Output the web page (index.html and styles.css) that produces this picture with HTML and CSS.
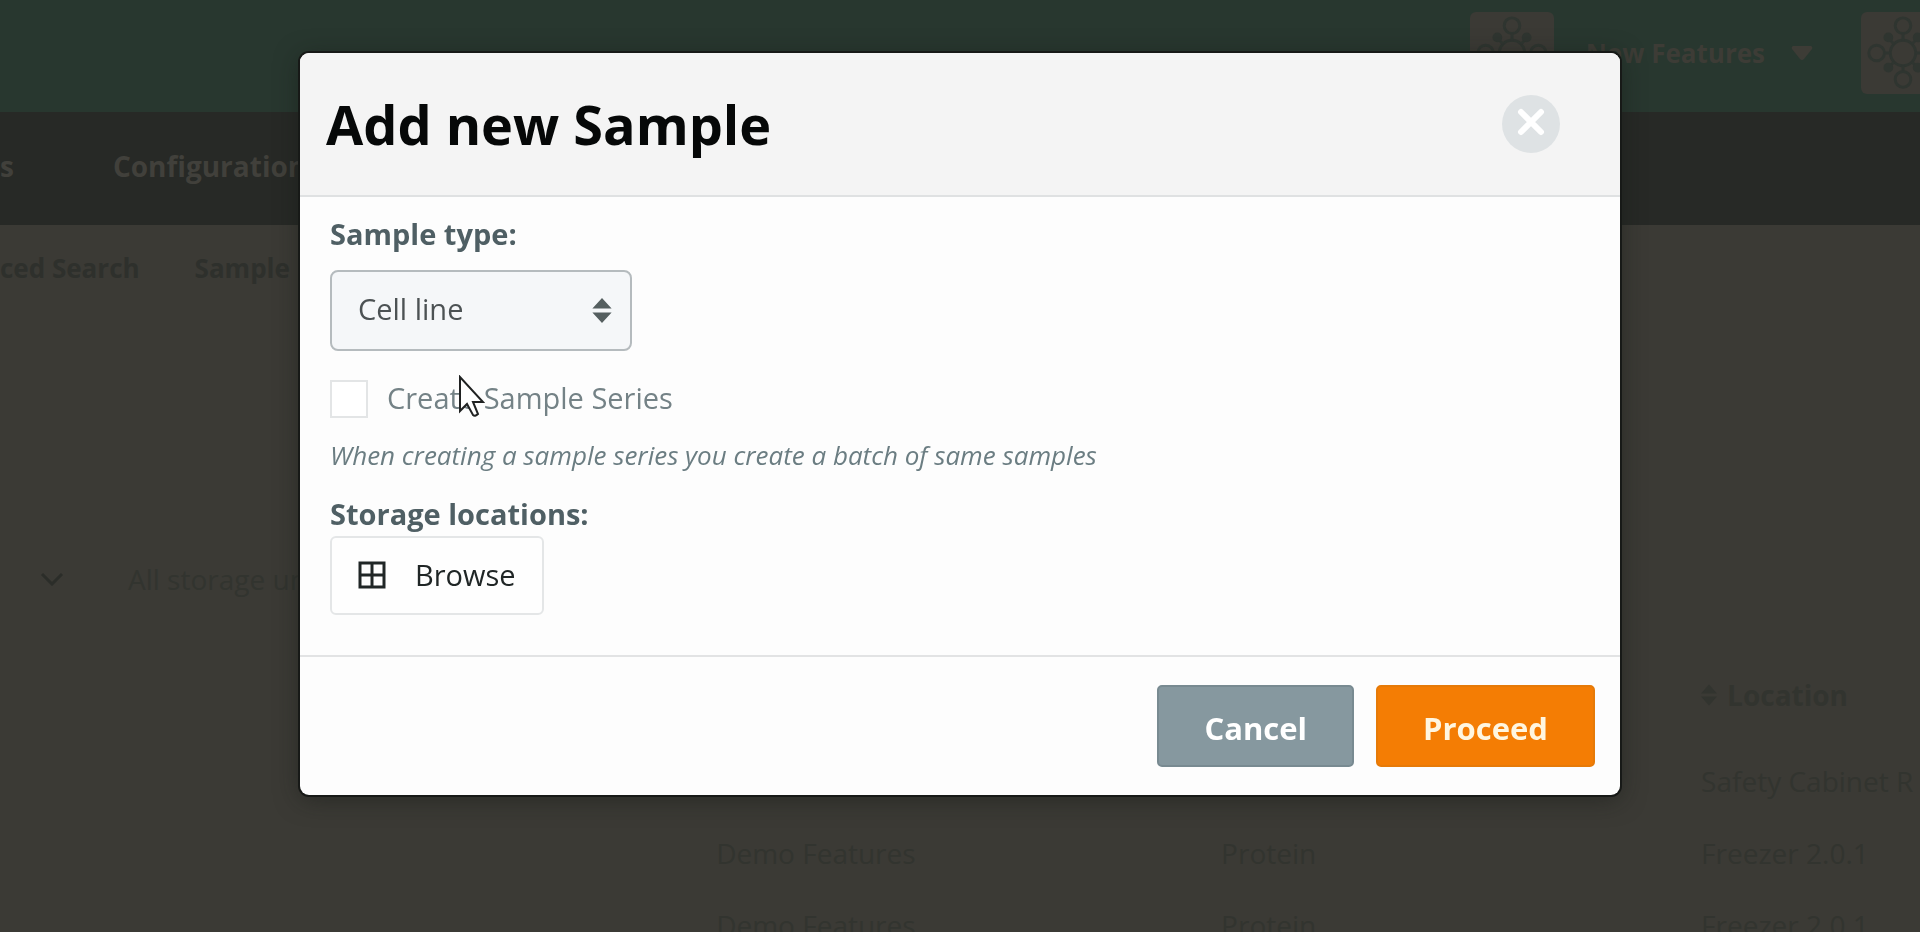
FILE: index.html
```html
<!DOCTYPE html>
<html lang="en">
<head>
    <meta charset="UTF-8">
    <meta name="viewport" content="width=device-width, initial-scale=1.0">
    <title>Add new Sample</title>
    <link rel="stylesheet" href="styles.css">
</head>
<body>
    <!-- shared shapes -->
    <svg class="defs" aria-hidden="true">
        <symbol id="molecule" viewBox="0 0 84 84">
            <g fill="none" stroke="currentColor" stroke-width="3">
                <circle cx="42" cy="42" r="13"/>
                <circle cx="42" cy="14" r="8"/>
                <circle cx="42" cy="69" r="8"/>
                <circle cx="15" cy="42" r="8"/>
                <circle cx="69" cy="42" r="8"/>
                <path d="M42 22v7M42 55v5M23 42h6M55 42h6M28 28l5 5M56 28l-5 5M28 56l5-5M56 56l-5-5"/>
            </g>
            <g fill="currentColor">
                <circle cx="27" cy="26" r="5"/>
                <circle cx="57" cy="26" r="5"/>
                <circle cx="27" cy="57" r="5"/>
                <circle cx="57" cy="57" r="5"/>
            </g>
        </symbol>
        <symbol id="sort" viewBox="0 0 20 26">
            <path d="M10 0L20 11H0zM0 15h20L10 26z" fill="currentColor"/>
        </symbol>
    </svg>

    <div class="page" inert>
        <header class="topbar">
            <span class="logo"><svg><use href="#molecule"/></svg></span>
            <a class="account" href="#">New Features</a>
            <svg class="caret" viewBox="0 0 22 14"><path d="M2 0h18q2 1 1 3L13 13q-2 2-4 0L1 3Q0 1 2 0z"/></svg>
            <span class="logo"><svg><use href="#molecule"/></svg></span>
        </header>
        <nav class="mainnav">
            <a href="#">s</a>
            <a href="#">Configuration</a>
        </nav>
        <nav class="subnav">
            <a href="#">ced Search</a>
            <a href="#">Sample</a>
        </nav>
        <div class="filters">
            <svg class="chevron" viewBox="0 0 24 14"><path d="M2 2l10 10L22 2"/></svg>
            <span>All storage units</span>
        </div>
        <table class="samples">
            <colgroup><col class="name"><col class="project"><col class="type"><col></colgroup>
            <thead>
                <tr><th></th><th></th><th></th><th><svg class="sort"><use href="#sort"/></svg>Location</th></tr>
            </thead>
            <tbody>
                <tr><td></td><td></td><td></td><td>Safety Cabinet R</td></tr>
                <tr><td></td><td>Demo Features</td><td>Protein</td><td>Freezer 2.0.1</td></tr>
                <tr><td></td><td>Demo Features</td><td>Protein</td><td>Freezer 2.0.1</td></tr>
            </tbody>
        </table>
    </div>

    <div class="overlay">
        <form class="modal" role="dialog" aria-labelledby="modalTitle">
            <div class="modal-header">
                <h1 id="modalTitle">Add new Sample</h1>
                <button type="button" class="close" aria-label="Close">
                    <svg viewBox="0 0 28 28"><path d="M4 4l20 20M24 4L4 24"/></svg>
                </button>
            </div>
            <div class="modal-body">
                <label class="title" for="sampleType">Sample type:</label>
                <div class="select">
                    <select id="sampleType">
                        <option>Cell line</option>
                    </select>
                    <svg><use href="#sort"/></svg>
                </div>
                <div class="check">
                    <input type="checkbox" id="series">
                    <label for="series">Create Sample Series</label>
                    <svg class="pointer" viewBox="0 0 27 42"><path d="M2 2v34l7-7 6 11q2 2 5-1l-5-12h10z"/></svg>
                </div>
                <p class="hint">When creating a sample series you create a batch of same samples</p>
                <label class="title" for="browse">Storage locations:</label>
                <button type="button" class="browse" id="browse" aria-label="Browse">
                    <svg viewBox="0 0 28 28"><path d="M2 2h24v24H2zM14 2v24M2 14h24"/></svg>
                    Browse
                </button>
            </div>
            <div class="modal-footer">
                <button type="button" class="btn cancel">Cancel</button>
                <button type="submit" class="btn proceed">Proceed</button>
            </div>
        </form>
    </div>
</body>
</html>
```

FILE: styles.css
```css
* {
    box-sizing: border-box;
}
body {
    margin: 0;
    height: 100vh;
    overflow: hidden;
    background: #3b3a35;
    color: #32342f;
    font-family: "Open Sans", "Noto Sans", sans-serif;
    font-size: 28px;
    line-height: 40px;
}
a {
    color: inherit;
    text-decoration: none;
}
button,
select {
    font: inherit;
}
.defs {
    display: none;
}

/* page behind the dialog */
.page {
    height: 100vh;
    overflow: hidden;
    white-space: nowrap;
}
.topbar {
    display: flex;
    align-items: center;
    justify-content: flex-end;
    height: 112px;
    padding-bottom: 6px;
    background: #28372f;
    color: #3d3c36;
    font-size: 26px;
    font-weight: 700;
}
.logo {
    flex: none;
    width: 84px;
    height: 82px;
    border-radius: 6px;
    background: #3b3a35;
    color: #2f3530;
}
.logo svg {
    width: 84px;
    height: 82px;
}
.logo:last-child {
    margin-left: 48px;
    margin-right: -25px;
}
.account {
    margin: 0 26px 0 32px;
}
.caret {
    width: 22px;
    height: 14px;
    fill: currentColor;
}
.mainnav,
.subnav {
    display: flex;
    align-items: center;
    font-weight: 700;
}
.mainnav {
    gap: 99px;
    height: 113px;
    padding-bottom: 5px;
    background: #272926;
    color: #41403b;
}
.subnav {
    gap: 55px;
    height: 86px;
    color: #2e302c;
    font-size: 26px;
}
.filters {
    display: flex;
    align-items: center;
    gap: 64px;
    height: 334px;
    padding: 238px 0 36px 40px;
}
.chevron {
    width: 24px;
    height: 14px;
    fill: none;
    stroke: #2b2d29;
    stroke-width: 3;
}
.samples {
    width: 100%;
    table-layout: fixed;
    border-collapse: collapse;
}
.samples .name {
    width: 37.3%;
}
.samples .project {
    width: 26.3%;
}
.samples .type {
    width: 25%;
}
.samples th,
.samples td {
    height: 72px;
    padding: 0;
    text-align: left;
}
.samples th {
    height: 100px;
}
.samples .sort {
    width: 16px;
    height: 22px;
    margin-right: 10px;
}

/* dialog */
.overlay {
    position: fixed;
    inset: 0;
    display: flex;
    align-items: flex-start;
    justify-content: center;
    padding: 53px 24px;
}
.modal {
    width: 100%;
    max-width: 1320px;
    overflow: hidden;
    border-radius: 9px;
    background: #fdfdfd;
    color: #59686c;
    font-size: 29px;
    box-shadow: 0 0 0 2px #171917, 0 4px 24px rgba(20, 24, 20, 0.5);
}
.modal-header {
    display: flex;
    align-items: center;
    justify-content: space-between;
    height: 144px;
    padding: 0 60px 0 26px;
    border-bottom: 2px solid #dfe1e2;
    background: #f4f4f4;
}
.modal-header h1 {
    margin: 0;
    color: #060808;
    font-size: 54px;
    line-height: 72px;
}
.close {
    display: flex;
    align-items: center;
    justify-content: center;
    width: 58px;
    height: 58px;
    padding: 0 0 4px;
    border: 0;
    border-radius: 50%;
    background: #dee2e4;
}
.close svg {
    width: 28px;
    height: 28px;
    fill: none;
    stroke: #fff;
    stroke-width: 6;
    stroke-linecap: round;
}
.modal-body {
    padding: 17px 30px 40px;
}
.title {
    display: block;
    color: #4f5f64;
    font-weight: 700;
}
.select {
    position: relative;
    width: 302px;
    margin-top: 16px;
}
.select select {
    display: block;
    width: 100%;
    height: 81px;
    padding: 0 26px 4px;
    border: 2px solid #b5bbbe;
    border-radius: 8px;
    background: #f5f7f9;
    color: #4c5254;
    appearance: none;
}
.select svg {
    position: absolute;
    top: 28px;
    right: 20px;
    width: 20px;
    height: 25px;
    color: #555f60;
    pointer-events: none;
}
.check {
    position: relative;
    display: flex;
    align-items: center;
    gap: 19px;
    margin-top: 28px;
    color: #748286;
}
.check input {
    width: 38px;
    height: 38px;
    margin: 0;
    border: 2px solid #e3e5e6;
    background: #fff;
    appearance: none;
}
.check label {
    padding-bottom: 2px;
    line-height: 38px;
}
.pointer {
    position: absolute;
    top: -4px;
    left: 128px;
    width: 27px;
    height: 42px;
    fill: #fff;
    stroke: #202222;
    stroke-width: 2;
}
.hint {
    margin: 16px 0 19px;
    color: #6b7d82;
    font-size: 26px;
    font-style: italic;
}
.browse {
    display: flex;
    align-items: center;
    gap: 29px;
    height: 79px;
    margin-top: 2px;
    padding: 0 26px 2px;
    border: 2px solid #e4e6e7;
    border-radius: 6px;
    background: #fefefe;
    color: #202626;
}
.browse svg {
    width: 28px;
    height: 28px;
    fill: none;
    stroke: #202626;
    stroke-width: 3;
}
.modal-footer {
    display: flex;
    justify-content: flex-end;
    gap: 22px;
    padding: 28px 25px;
    border-top: 2px solid #e2e3e4;
}
.btn {
    height: 82px;
    padding: 4px 45px 0;
    border: 2px solid #788a91;
    border-radius: 5px;
    background: #86989f;
    color: #fff;
    font-size: 31px;
    font-weight: 700;
}
.proceed {
    border-color: #e67a08;
    background: #f47d04;
    color: #fff6e0;
}
```
